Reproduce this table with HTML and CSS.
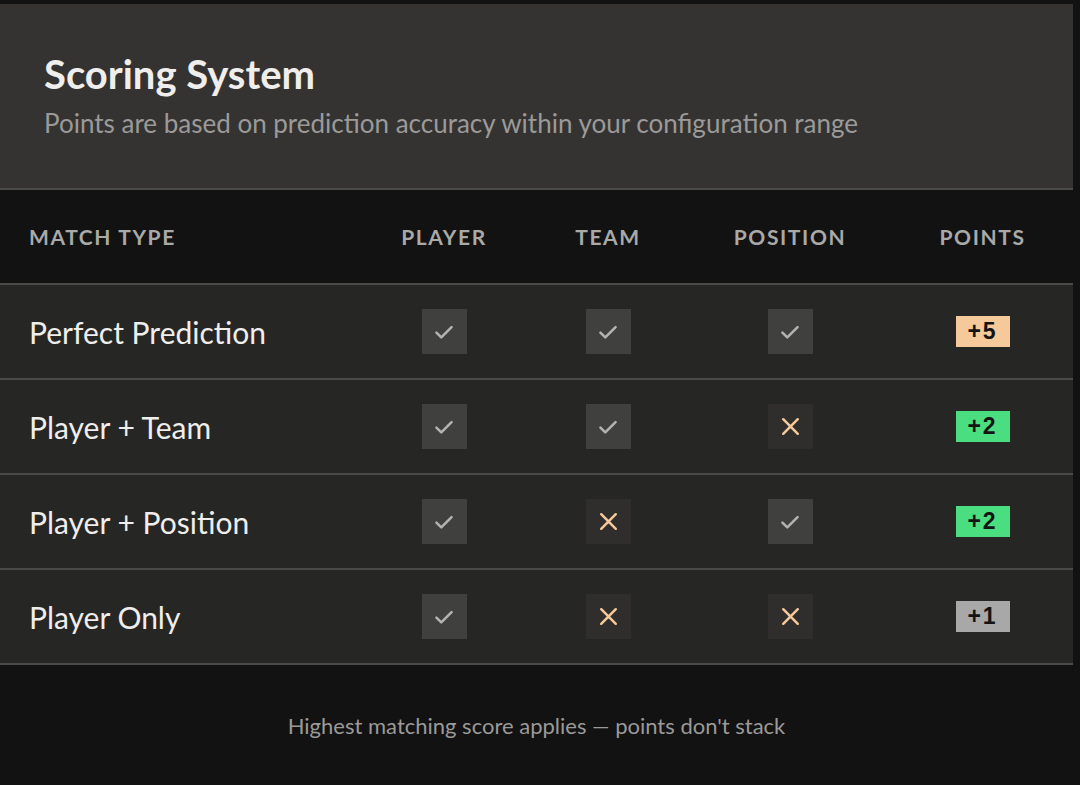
FILE: index.html
```html
<!DOCTYPE html>
<html lang="en">
<head>
    <meta charset="UTF-8">
    <meta name="viewport" content="width=device-width, initial-scale=1.0">
    <title>Scoring System</title>
    <link rel="stylesheet" href="styles.css">
</head>
<body>
    <div class="page">
        <div class="card">
            <div class="card-header">
                <h1>Scoring System</h1>
                <p class="subtitle">Points are based on prediction accuracy within your configuration range</p>
            </div>
            <div class="grid head">
                <div class="cell label">Match Type</div>
                <div class="cell">Player</div>
                <div class="cell">Team</div>
                <div class="cell">Position</div>
                <div class="cell">Points</div>
            </div>
            <div class="grid row">
                <div class="cell label">Perfect Prediction</div>
                <div class="cell"><span class="mark yes"><svg viewBox="0 0 24 24"><path d="M5 12.5l4.5 4.5L19 7.5"/></svg></span></div>
                <div class="cell"><span class="mark yes"><svg viewBox="0 0 24 24"><path d="M5 12.5l4.5 4.5L19 7.5"/></svg></span></div>
                <div class="cell"><span class="mark yes"><svg viewBox="0 0 24 24"><path d="M5 12.5l4.5 4.5L19 7.5"/></svg></span></div>
                <div class="cell"><span class="badge gold">+5</span></div>
            </div>
            <div class="grid row">
                <div class="cell label">Player + Team</div>
                <div class="cell"><span class="mark yes"><svg viewBox="0 0 24 24"><path d="M5 12.5l4.5 4.5L19 7.5"/></svg></span></div>
                <div class="cell"><span class="mark yes"><svg viewBox="0 0 24 24"><path d="M5 12.5l4.5 4.5L19 7.5"/></svg></span></div>
                <div class="cell"><span class="mark no"><svg viewBox="0 0 24 24"><path d="M5 5l14 14M19 5L5 19"/></svg></span></div>
                <div class="cell"><span class="badge green">+2</span></div>
            </div>
            <div class="grid row">
                <div class="cell label">Player + Position</div>
                <div class="cell"><span class="mark yes"><svg viewBox="0 0 24 24"><path d="M5 12.5l4.5 4.5L19 7.5"/></svg></span></div>
                <div class="cell"><span class="mark no"><svg viewBox="0 0 24 24"><path d="M5 5l14 14M19 5L5 19"/></svg></span></div>
                <div class="cell"><span class="mark yes"><svg viewBox="0 0 24 24"><path d="M5 12.5l4.5 4.5L19 7.5"/></svg></span></div>
                <div class="cell"><span class="badge green">+2</span></div>
            </div>
            <div class="grid row">
                <div class="cell label">Player Only</div>
                <div class="cell"><span class="mark yes"><svg viewBox="0 0 24 24"><path d="M5 12.5l4.5 4.5L19 7.5"/></svg></span></div>
                <div class="cell"><span class="mark no"><svg viewBox="0 0 24 24"><path d="M5 5l14 14M19 5L5 19"/></svg></span></div>
                <div class="cell"><span class="mark no"><svg viewBox="0 0 24 24"><path d="M5 5l14 14M19 5L5 19"/></svg></span></div>
                <div class="cell"><span class="badge grey">+1</span></div>
            </div>
        </div>
        <p class="note">Highest matching score applies — points don't stack</p>
    </div>
</body>
</html>
```

FILE: styles.css
```css
body {
    margin: 0;
    background-color: #121212;
    font-family: Lato, "Open Sans", sans-serif;
    color: #ececec;
}

.page {
    width: 1073px;
    padding-top: 4px;
}

.card {
    background-color: #262625;
}

.card-header {
    background-color: #343332;
    padding: 48px 44px 0;
    height: 136px;
    border-bottom: 2px solid #4a4a49;
}

h1 {
    margin: 0;
    font-size: 40px;
    font-weight: 700;
    line-height: 44px;
    color: #efeeec;
}

.subtitle {
    margin: 12px 0 0;
    font-size: 26px;
    line-height: 30px;
    color: #9b9a99;
}

.grid {
    display: grid;
    grid-template-columns: 360px 168px 160px 204px 1fr;
    align-items: center;
    height: 93px;
    border-bottom: 2px solid #4a4a49;
}

.head {
    background-color: #121212;
}

.cell {
    display: flex;
    justify-content: center;
    align-items: center;
}

.cell.label {
    justify-content: flex-start;
    padding-left: 29px;
}

.head .cell {
    font-size: 21px;
    font-weight: 700;
    letter-spacing: 1.6px;
    text-transform: uppercase;
    color: #a9a9a8;
}

.row .cell.label {
    font-size: 30px;
    color: #efeeec;
}

.mark {
    width: 45px;
    height: 45px;
    display: flex;
    align-items: center;
    justify-content: center;
}

.mark svg {
    width: 26px;
    height: 26px;
    fill: none;
    stroke-width: 2.3;
    stroke-linecap: round;
    stroke-linejoin: round;
}

.mark.yes {
    background-color: #40403f;
}

.mark.yes svg {
    stroke: #b3b3b2;
}

.mark.no {
    background-color: #302e2c;
}

.mark.no svg {
    width: 25px;
    height: 25px;
    stroke-width: 2.4;
    stroke: #f5c99a;
}

.badge {
    width: 54px;
    height: 31px;
    display: flex;
    align-items: center;
    justify-content: center;
    font-family: "Liberation Sans", Arial, sans-serif;
    font-size: 23px;
    font-weight: 700;
    letter-spacing: 2px;
    color: #141414;
}

.gold {
    background-color: #f5c99a;
}

.green {
    background-color: #4ade80;
}

.grey {
    background-color: #a8a8a8;
}

.note {
    margin: 48px 0 0;
    text-align: center;
    font-size: 22px;
    line-height: 26px;
    color: #9b9a99;
}
```
